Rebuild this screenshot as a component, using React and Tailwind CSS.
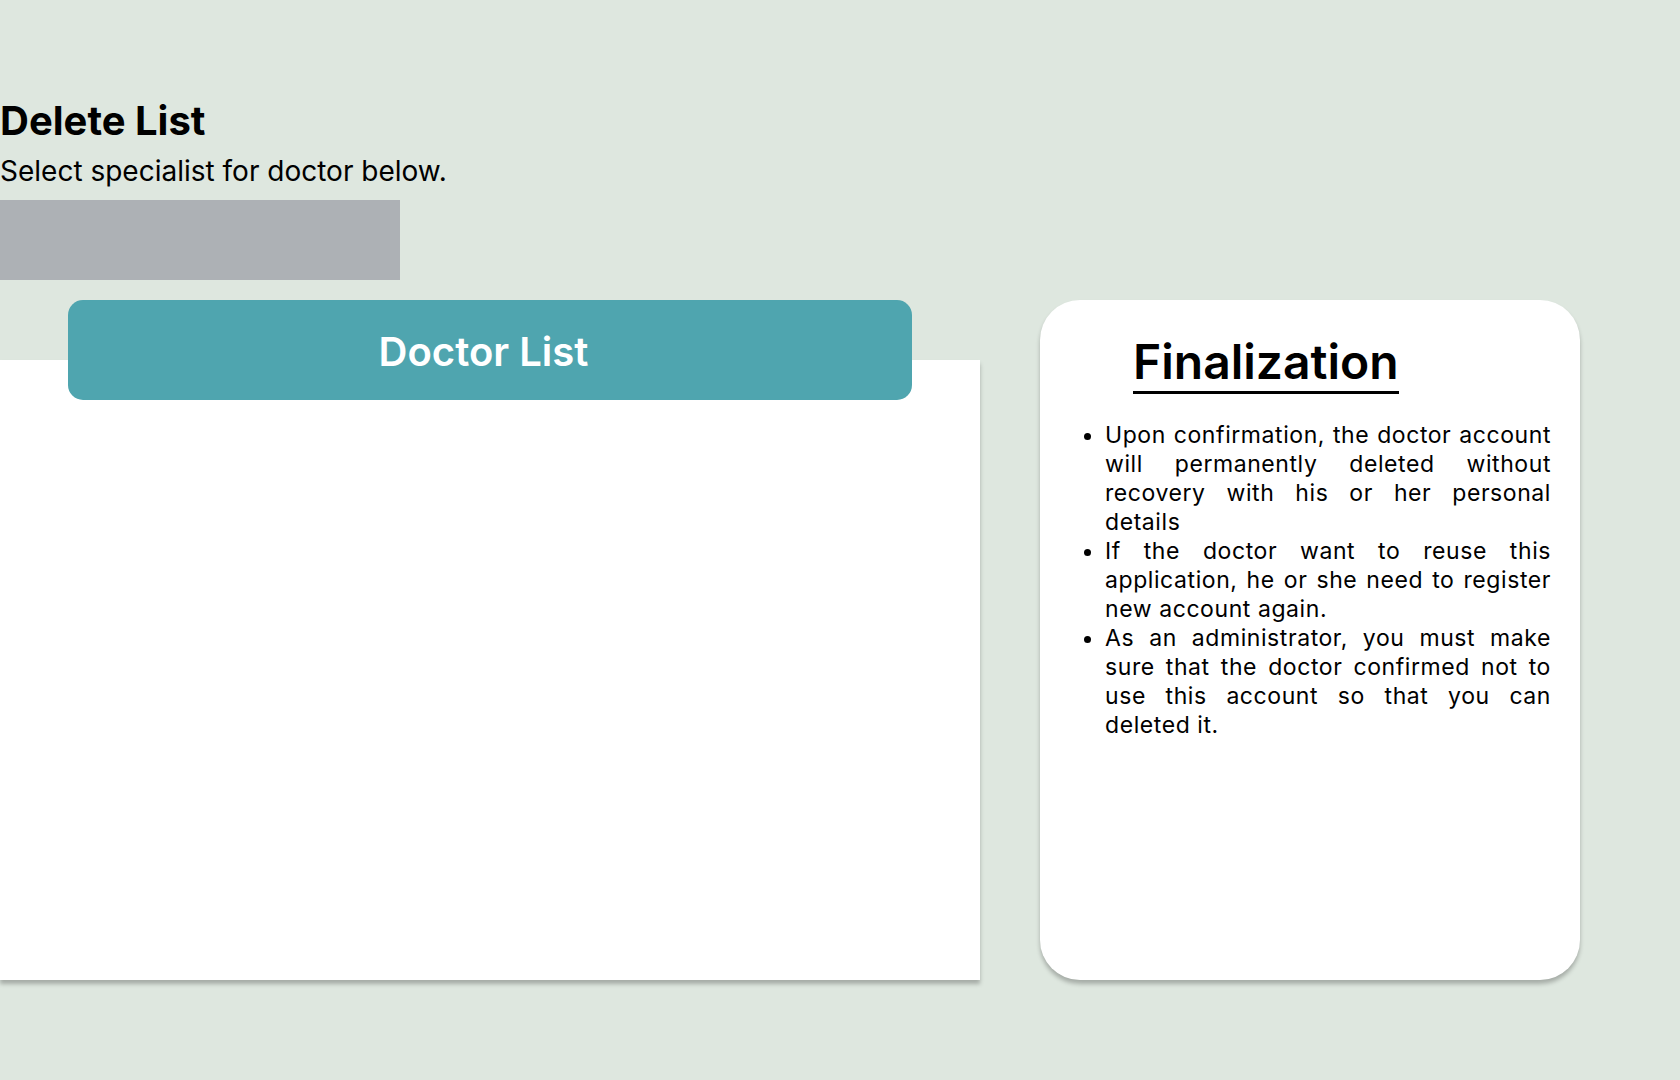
const notes = [
  "Upon confirmation, the doctor account will permanently deleted without recovery with his or her personal details",
  "If the doctor want to reuse this application, he or she need to register new account again.",
  "As an administrator, you must make sure that the doctor confirmed not to use this account so that you can deleted it."
];

export default function App() {
  return (
    <div className="min-h-screen w-full bg-[#dee7df] font-['Inter',sans-serif] text-black">
      <div className="pt-[97px]">
        <h1 className="text-[40px] font-bold leading-[48px]">Delete List</h1>
        <p className="mt-[9px] text-[28px] leading-[34px]">Select specialist for doctor below.</p>
        <div className="mt-[12px] h-[80px] w-[400px] bg-[#adb1b5]" />
      </div>

      <div className="mt-[20px] flex items-start">
        <section className="w-[980px]">
          <div className="relative z-10 mx-[68px] flex h-[100px] items-center justify-center rounded-[15px] bg-[#4fa5af] pt-[4px] pr-[13px]">
            <h2 className="text-[40px] font-semibold text-white">Doctor List</h2>
          </div>
          <div className="-mt-[40px] h-[620px] bg-white shadow-[0_4px_4px_rgba(0,0,0,0.25)]" />
        </section>

        <aside className="ml-[60px] h-[680px] w-[540px] rounded-[40px] bg-white px-[29px] pt-[33px] shadow-[0_4px_4px_rgba(0,0,0,0.25)]">
          <h2 className="ml-[64px] inline-block border-b-[3px] border-black text-[48px] font-semibold leading-[58px]">
            Finalization
          </h2>
          <ul className="mt-[27px] list-disc pl-[36px] text-[23px] leading-[29px] tracking-[0.025em]">
            {notes.map((note) => (
              <li key={note} className="text-justify">
                {note}
              </li>
            ))}
          </ul>
        </aside>
      </div>
    </div>
  );
}
